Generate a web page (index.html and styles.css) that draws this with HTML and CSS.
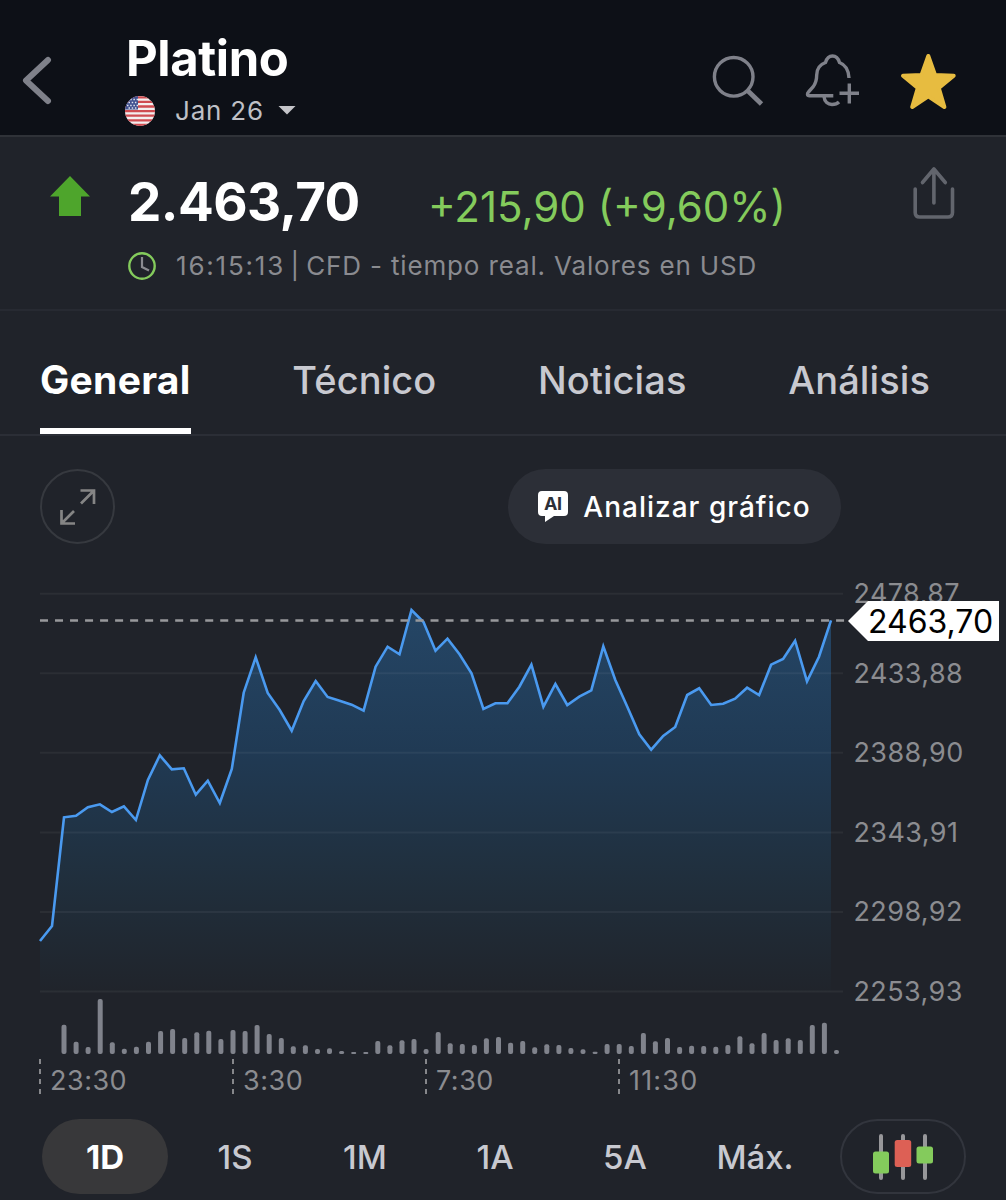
FILE: index.html
```html
<!DOCTYPE html>
<html lang="es">

<head>
    <meta charset="UTF-8">
    <meta name="viewport" content="width=device-width, initial-scale=1.0">
    <title>Platino</title>
    <link rel="stylesheet" href="styles.css">
</head>

<body>
    <header class="header">
        <svg class="back" width="30" height="50" viewBox="0 0 30 50">
            <path d="M26 4L4 24.5L26 45" />
        </svg>
        <div class="instrument">
            <h1>Platino</h1>
            <div class="contract">
                <svg class="flag" width="30" height="30" viewBox="0 0 30 30">
                    <clipPath id="round"><circle cx="15" cy="15" r="15" /></clipPath>
                    <g clip-path="url(#round)">
                        <rect width="30" height="30" fill="#f3eeee" />
                        <path d="M0 1.3h30M0 5.9h30M0 10.5h30M0 15.1h30M0 19.7h30M0 24.3h30M0 28.9h30" stroke="#cf4b50" stroke-width="2.3" />
                        <rect width="13" height="13.5" fill="#40508f" />
                        <path d="M2 3.5h11M3.5 6.5h9M2 9.5h11M3.5 12h9" stroke="#dfe3ee" stroke-width="1.3" stroke-dasharray="1.5 1.7" />
                    </g>
                </svg>
                <span class="contract-name">Jan 26</span>
                <svg width="18" height="9" viewBox="0 0 18 9"><path d="M0.5 0h17L9 8.5z" fill="#c4c4c9" /></svg>
            </div>
        </div>
        <div class="actions">
            <svg class="icon" width="52" height="56" viewBox="0 -2 52 56">
                <circle cx="21.7" cy="21.8" r="19.3" />
                <path d="M35.5 35.5L49.5 49" stroke-width="4.8" />
            </svg>
            <svg class="icon" width="54" height="56" viewBox="-1 0 54 56">
                <path d="M27.3 42.7H3.5C1 42.7 1 40.5 2.5 39L7 34C10 30 10.7 27 10.7 22C10.7 15 14 11.5 19.5 9.5C21 4.5 23.5 3 26.5 3S32 4.5 33.5 9.5C39 11.5 42.5 16 43 25" />
                <path d="M18 43.5C18.5 49 22 51.5 26 51.5C29 51.5 31.5 50.5 33 49" />
                <path d="M43.3 30.5V50.5M33.5 40.3H53" />
            </svg>
            <svg class="star" width="58" height="58" viewBox="0 0 58 58">
                <path d="M28.3 3L35 22L53.7 22.7L38.8 35L44.4 54L28.3 43.4L12.2 54L17.8 35L3 22.7L21.6 22z" />
            </svg>
        </div>
    </header>

    <section class="quote">
        <svg class="up" width="40" height="40" viewBox="0 0 40 40"><path d="M20 0L40 20.5H31V40H9V20.5H0z" /></svg>
        <div class="quote-body">
            <div class="quote-line">
                <span class="price">2.463,70</span>
                <span class="change">+215,90 (+9,60%)</span>
            </div>
            <div class="status">
                <svg width="28" height="28" viewBox="0 0 28 28">
                    <circle cx="14" cy="14" r="12.7" />
                    <path d="M14 5V15L21 18.5" />
                </svg>
                <span><span class="clock">16:15:13 | </span>CFD - tiempo real. Valores en USD</span>
            </div>
        </div>
        <svg class="share" width="42" height="54" viewBox="0 0 42 54">
            <path d="M2.2 23V46.5Q2.2 51 6.7 51H35Q39.5 51 39.5 46.5V23M20.9 3V37M9.5 16.5L20.9 3L32.3 16.5" />
        </svg>
    </section>

    <nav class="tabs">
        <a class="tab active">General</a>
        <a class="tab">Técnico</a>
        <a class="tab">Noticias</a>
        <a class="tab">Análisis</a>
    </nav>

    <div class="toolbar">
        <button class="expand">
            <svg width="36" height="36" viewBox="0 0 36 36">
                <path d="M20.5 1.5H34V15M34 1.5L21 14.5M1.5 21V34.5H15M1.5 34.5L14 22" />
            </svg>
        </button>
        <button class="analyze">
            <svg width="30" height="31" viewBox="0 0 30 31">
                <path d="M4 0H26Q30 0 30 4V21Q30 25 26 25H16L7 31V25H4Q0 25 0 21V4Q0 0 4 0z" fill="#fff" />
                <text x="15" y="19" text-anchor="middle" textLength="18">AI</text>
            </svg>
            <span>Analizar gráfico</span>
        </button>
    </div>

    <main class="chart">
        <svg class="plot" width="846" height="478" viewBox="0 580 846 478">
            <defs>
                <linearGradient id="fill" gradientUnits="userSpaceOnUse" x1="0" y1="610" x2="0" y2="992">
                    <stop offset="0" stop-color="#254666" />
                    <stop offset="0.37" stop-color="#203a54" />
                    <stop offset="0.7" stop-color="#202f3d" />
                    <stop offset="1" stop-color="#20242b" />
                </linearGradient>
            </defs>
            <path id="area" fill="url(#fill)" />
            <path class="grid-lines" d="M40 593.7H843M40 673.3H843M40 752.8H843M40 832.4H843M40 912H843M40 991.5H843" />
            <polyline id="line" class="line" />
            <path class="last-price" d="M40 620.5H845" />
            <g id="volume" fill="#80838c"></g>
        </svg>
        <div class="axis">
            <span>2478,87</span>
            <span>2433,88</span>
            <span>2388,90</span>
            <span>2343,91</span>
            <span>2298,92</span>
            <span>2253,93</span>
            <div class="price-tag">2463,70</div>
        </div>
    </main>

    <div class="times">
        <span>23:30</span>
        <span>3:30</span>
        <span>7:30</span>
        <span class="wide">11:30</span>
    </div>

    <div class="ranges">
        <button class="range selected">1D</button>
        <button class="range">1S</button>
        <button class="range">1M</button>
        <button class="range">1A</button>
        <button class="range">5A</button>
        <button class="range">Máx.</button>
        <button class="range candles">
            <svg width="62" height="46" viewBox="0 0 62 46">
                <path d="M9 2V44M31 2V44M53 2V44" stroke="#97979a" stroke-width="4" stroke-linecap="round" />
                <rect x="1" y="17.5" width="16" height="22" rx="2.5" fill="#84cb5c" />
                <rect x="22.7" y="6" width="16.5" height="27" rx="2.5" fill="#dd6055" />
                <rect x="44.5" y="12.5" width="16.5" height="17" rx="2.5" fill="#84cb5c" />
            </svg>
        </button>
    </div>

    <script>
        // Price line, one point per 12px
        const prices = [
            941, 926, 817.3, 815.7, 807.3, 804.3, 812, 806.3, 820, 780, 755.3, 769.3, 768.3, 794.7, 780.7, 803, 769,
            692.7, 657.3, 693, 710, 730.7, 701, 681, 697, 700.7, 704.7, 710.7, 666.7, 646.7, 654.3, 610, 622, 650.7,
            638.7, 654.3, 673.3, 709, 703.3, 703.3, 686.7, 664.7, 706.7, 684, 705, 696.7, 690.3, 646.3, 680, 706.7,
            734.3, 749.7, 736, 727, 695, 688.3, 705, 703.7, 698.7, 687.7, 695, 664.7, 659, 640.7, 681.3, 656.7, 620.3
        ];
        const points = prices.map((y, i) => `${(40 + i * 11.985).toFixed(1)},${y}`);
        document.getElementById('line').setAttribute('points', points.join(' '));
        document.getElementById('area').setAttribute('d', `M40,991.5L${points.join('L')}L831,991.5Z`);

        // Volume bars
        const volumes = [
            29.3, 12.3, 7, 55, 11.7, 5.3, 7.3, 12.3, 23, 25, 16, 21.7, 23.3, 15, 24, 23, 29, 20, 16, 7.7, 8.7, 5,
            5.7, 3, 2, 2, 13, 8.7, 13.7, 15, 5, 22, 10.7, 10, 9, 15.7, 17, 11.3, 13, 6.7, 9.7, 9, 6, 4.7, 2.3, 10,
            10, 8, 21, 12.7, 16, 7, 8.3, 8, 7.3, 9, 17.7, 10.7, 21, 14, 15.7, 14, 29, 31.3, 4
        ];
        document.getElementById('volume').innerHTML = volumes.map((h, i) =>
            `<rect x="${(61.5 + i * 12.07).toFixed(1)}" y="${1054 - h}" width="5" height="${h}" rx="${Math.min(2, h / 2)}" />`
        ).join('');
    </script>
</body>

</html>
```

FILE: styles.css
```css
* {
    margin: 0;
    padding: 0;
    box-sizing: border-box;
    font-family: Inter, 'Liberation Sans', sans-serif;
}

body {
    width: 1006px;
    height: 1200px;
    overflow: hidden;
    background: #20232a;
    color: #c8c9d0;
}

svg {
    display: block;
    flex: none;
    fill: none;
}

span,
h1,
a {
    white-space: nowrap;
}

button {
    display: flex;
    align-items: center;
    justify-content: center;
    border: none;
    background: none;
    color: inherit;
}

.header {
    display: flex;
    align-items: flex-start;
    height: 137px;
    padding: 28px 48px 0 22px;
    background: #0d1017;
    border-bottom: 2px solid #2f3238;
}

.back {
    margin-top: 28px;
    stroke: #7f818a;
    stroke-width: 6;
    stroke-linecap: round;
    stroke-linejoin: round;
}

.instrument {
    margin-left: 73px;
}

.instrument h1 {
    margin-left: 1px;
    color: #fff;
    font-size: 49px;
    font-weight: 700;
    line-height: 62px;
    letter-spacing: -0.4px;
}

.contract {
    display: flex;
    align-items: center;
    height: 41px;
}

.contract-name {
    margin: 0 14px 0 20px;
    color: #bfc0c6;
    font-size: 26px;
    letter-spacing: 0.8px;
}

.actions {
    display: flex;
    gap: 41px;
    margin: 25px 0 0 auto;
}

.icon {
    stroke: #7f818a;
    stroke-width: 3.4;
}

.star path {
    fill: #e7bc40;
    stroke: #e7bc40;
    stroke-width: 4;
    stroke-linejoin: round;
}

.quote {
    display: flex;
    align-items: flex-start;
    height: 174px;
    padding: 29px 51px 0 50px;
    border-bottom: 2px solid #272a32;
}

.up {
    margin-top: 10px;
    fill: #4ea52c;
}

.quote-body {
    margin-left: 38px;
}

.quote-line {
    display: flex;
    height: 72px;
}

.price {
    width: 300px;
    color: #fff;
    font-size: 53px;
    font-weight: 700;
    line-height: 72px;
    letter-spacing: -0.6px;
}

.change {
    color: #84cb5c;
    font-size: 42px;
    line-height: 81px;
}

.status {
    display: flex;
    align-items: center;
    gap: 20px;
    height: 55px;
    color: #8a8b90;
    font-size: 26px;
}

.status span {
    letter-spacing: 0.85px;
}

.status .clock {
    letter-spacing: 1.8px;
    word-spacing: -3.8px;
}

.status circle {
    stroke: #84cb5c;
    stroke-width: 2.4;
}

.status path {
    stroke: #8a8b90;
    stroke-width: 2.2;
}

.share {
    margin: 0 0 0 auto;
    stroke: #62656d;
    stroke-width: 3.6;
    stroke-linecap: round;
    stroke-linejoin: round;
}

.tabs {
    display: flex;
    justify-content: space-between;
    height: 125px;
    padding: 0 76px 0 40px;
    border-bottom: 2px solid #2b2e36;
}

.tab {
    height: 123px;
    font-size: 38px;
    font-weight: 500;
    line-height: 138px;
    letter-spacing: 0.1px;
}

.tab.active {
    color: #fff;
    font-size: 39px;
    font-weight: 700;
    letter-spacing: 0.3px;
    border-bottom: 6px solid #fff;
}

.toolbar {
    display: flex;
    justify-content: space-between;
    height: 144px;
    padding: 33px 165px 0 40px;
}

.expand {
    width: 75px;
    height: 75px;
    border: 2px solid #36393f;
    border-radius: 50%;
}

.expand svg {
    stroke: #858585;
    stroke-width: 2.7;
}

.analyze {
    gap: 15px;
    width: 333px;
    height: 75px;
    border-radius: 38px;
    background: #2c2f37;
    color: #fff;
    font-size: 28px;
    font-weight: 500;
    letter-spacing: 1px;
}

.analyze text {
    fill: #2c2f37;
    font-size: 18px;
    font-weight: 700;
    letter-spacing: 0;
}

.chart {
    display: flex;
    height: 478px;
}

.line {
    stroke: #4a9af0;
    stroke-width: 2.6;
    stroke-linejoin: miter;
}

.grid-lines {
    stroke: #fff;
    stroke-opacity: 0.05;
    stroke-width: 2;
}

.last-price {
    stroke: #98999c;
    stroke-width: 2.6;
    stroke-dasharray: 8 7.02;
}

.axis {
    position: relative;
    display: flex;
    flex-direction: column;
    gap: 39.5px;
    width: 160px;
    margin-top: -6px;
}

.axis span {
    height: 40px;
    padding-left: 7.5px;
    color: #8b8c90;
    font-size: 27px;
    line-height: 40px;
    letter-spacing: 0.4px;
}

/* current price label sits over the axis */
.price-tag {
    position: absolute;
    top: 27px;
    left: 2px;
    width: 151px;
    height: 40px;
    padding-left: 20px;
    background: #fff;
    clip-path: polygon(0 50%, 20px 0, 100% 0, 100% 100%, 20px 100%);
    color: #000;
    font-size: 32px;
    line-height: 41px;
}

.times {
    display: flex;
    height: 60px;
    margin-top: 1px;
    padding-left: 39px;
}

.times span {
    width: 193px;
    height: 36px;
    padding-left: 11px;
    background: repeating-linear-gradient(#86878b 0 5px, transparent 5px 10px) left / 2px 36px no-repeat;
    color: #8b8c90;
    font-size: 27px;
    line-height: 43px;
    letter-spacing: 0.5px;
}

.times .wide {
    letter-spacing: 1.2px;
}

.ranges {
    display: flex;
    gap: 4px;
    padding-left: 42px;
}

.range {
    flex: none;
    width: 126px;
    height: 75px;
    border-radius: 38px;
    font-size: 33px;
    font-weight: 500;
}

.range.selected {
    background: #38383a;
    color: #fff;
    font-weight: 700;
}

.range.candles {
    margin-left: 18px;
    border: 2px solid #32353d;
}
```
